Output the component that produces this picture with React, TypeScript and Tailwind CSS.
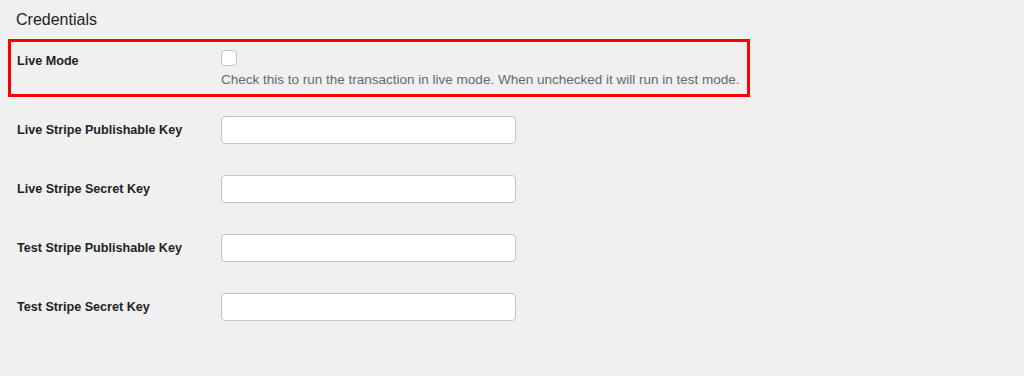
const fields = [
  "Live Stripe Publishable Key",
  "Live Stripe Secret Key",
  "Test Stripe Publishable Key",
  "Test Stripe Secret Key",
];

export default function App() {
  return (
    <div className="h-[376px] w-full bg-[#f0f0f1] text-[#1d2327] font-['Liberation_Sans',Arial,sans-serif] overflow-hidden">
      <h2 className="pl-4 pt-[9px] text-[16px] leading-[22px] font-normal">Credentials</h2>

      <div className="ml-2 mt-[8px] w-[742px] h-[58px] border-[3px] border-[#ff0000] flex">
        <div className="w-[210px] pl-[6px] pt-[9px] text-[12.6px] leading-[20px] font-bold">Live Mode</div>
        <div className="pt-[8px]">
          <div className="w-4 h-4 rounded-[4px] border border-[#c3c4c7] bg-white" />
          <p className="mt-[4px] text-[13.5px] leading-[20px] text-[#646970]">
            Check this to run the transaction in live mode. When unchecked it will run in test mode.
          </p>
        </div>
      </div>

      <div className="pl-[17px] pt-[19px] flex flex-col gap-[31px]">
        {fields.map((label) => (
          <div key={label} className="flex items-center h-[28px]">
            <label className="w-[204px] text-[12.6px] font-bold">{label}</label>
            <input
              type="text"
              className="w-[295px] h-[28px] bg-white border border-[#c3c4c7] rounded-[4px] px-2 text-[13px] outline-none"
            />
          </div>
        ))}
      </div>
    </div>
  );
}
